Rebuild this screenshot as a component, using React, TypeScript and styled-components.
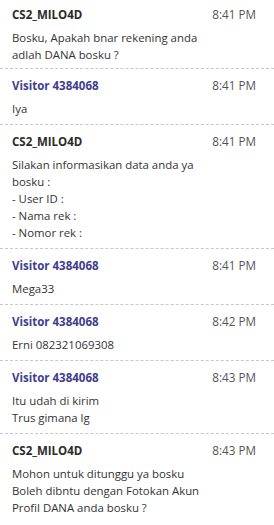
import React from 'react'
import styled, { createGlobalStyle } from 'styled-components'

const GlobalStyle = createGlobalStyle`
    body {
        margin: 0;
        background: #fff;
        font-family: "Open Sans", "Liberation Sans", sans-serif;
    }
`

const List = styled.div`
    width: 274px;
    display: flex;
    flex-direction: column;
`

const Item = styled.div`
    padding: 8px 18px 7px 12px;
    border-bottom: 1px dashed #c8c8c8;
    &:first-child {
        padding-top: 6px;
        padding-bottom: 5px;
    }
    &:last-child {
        border-bottom: none;
    }
`

const Header = styled.div`
    display: flex;
    justify-content: space-between;
    align-items: center;
    height: 16px;
`

const Name = styled.span<{ $visitor?: boolean }>`
    font-size: 11.5px;
    font-weight: 700;
    color: ${(p) => (p.$visitor ? '#3d3e8f' : '#2b2b2b')};
`

const Time = styled.span`
    font-size: 11.7px;
    color: #555;
`

const Body = styled.div`
    margin-top: 7px;
    font-size: 11.4px;
    line-height: 17px;
    color: #333;
    padding-right: 48px;
`

type Msg = { name: string; time: string; visitor?: boolean; lines: string[] }

const messages: Msg[] = [
    { name: 'CS2_MILO4D', time: '8:41 PM', lines: ['Bosku, Apakah bnar rekening anda adlah DANA bosku ?'] },
    { name: 'Visitor 4384068', time: '8:41 PM', visitor: true, lines: ['Iya'] },
    { name: 'CS2_MILO4D', time: '8:41 PM', lines: ['Silakan informasikan data anda ya bosku :', '- User ID :', '- Nama rek :', '- Nomor rek :'] },
    { name: 'Visitor 4384068', time: '8:41 PM', visitor: true, lines: ['Mega33'] },
    { name: 'Visitor 4384068', time: '8:42 PM', visitor: true, lines: ['Erni 082321069308'] },
    { name: 'Visitor 4384068', time: '8:43 PM', visitor: true, lines: ['Itu udah di kirim', 'Trus gimana lg'] },
    { name: 'CS2_MILO4D', time: '8:43 PM', lines: ['Mohon untuk ditunggu ya bosku', 'Boleh dibntu dengan Fotokan Akun Profil DANA anda bosku ?'] },
]

function App() {
    return (
        <>
            <GlobalStyle />
            <List>
                {messages.map((m, i) => (
                    <Item key={i}>
                        <Header>
                            <Name $visitor={m.visitor}>{m.name}</Name>
                            <Time>{m.time}</Time>
                        </Header>
                        <Body>
                            {m.lines.map((l, j) => (
                                <div key={j}>{l}</div>
                            ))}
                        </Body>
                    </Item>
                ))}
            </List>
        </>
    )
}

export default App
